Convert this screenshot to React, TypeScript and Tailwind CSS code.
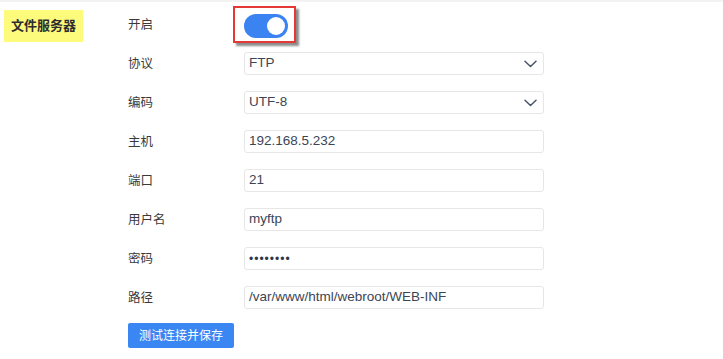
import React from "react";

const font = { fontFamily: '"Liberation Sans", "Noto Sans CJK SC", sans-serif' };

function Chevron() {
  return (
    <svg width="13" height="8" viewBox="0 0 13 8" fill="none" className="shrink-0">
      <path d="M1 1.2L6.5 6.5L12 1.2" stroke="#4a5568" strokeWidth="1.5" strokeLinecap="round" strokeLinejoin="round" />
    </svg>
  );
}

function Row({ label, children }: { label: string; children: React.ReactNode }) {
  return (
    <div className="flex h-[39px] items-center">
      <div className="w-[116px] pt-[2px] text-[12.5px] text-[#3a3a3a]">{label}</div>
      {children}
    </div>
  );
}

function Field({ value, select, dots }: { value: string; select?: boolean; dots?: boolean }) {
  return (
    <div className="flex h-[23px] w-[300px] items-center justify-between rounded-[3px] border border-[#e6e6e6] bg-white pl-[4px] pr-[6px]">
      <span className={dots ? "text-[12px] tracking-[1px] text-[#2d3748]" : "text-[13.5px] text-[#3c4554]"}>{value}</span>
      {select && <Chevron />}
    </div>
  );
}

export default function App() {
  return (
    <div className="h-[359px] w-[723px] overflow-hidden bg-white" style={font}>
      <div className="h-[2px] bg-[#f3f3f3]" />
      <div className="flex">
        <div className="w-[128px] pl-[4px] pt-[8px]">
          <div className="flex h-[32px] w-[79px] items-center justify-center bg-[#fdfb7c] text-[13px] font-bold text-[#2d2d2d]">
            文件服务器
          </div>
        </div>
        <div className="flex flex-col pt-[3px]">
          <Row label="开启">
            <div className="-ml-[11px] h-[37px] w-[63px] border-2 border-[#e53935] pl-[9px] pt-[6px] shadow-[3px_3px_2px_rgba(0,0,0,0.45)]">
              <div className="flex h-[24px] w-[44px] items-center justify-end rounded-full bg-[#3a83f1] pr-[3px]">
                <div className="h-[18px] w-[18px] rounded-full bg-white" />
              </div>
            </div>
          </Row>
          <Row label="协议">
            <Field value="FTP" select />
          </Row>
          <Row label="编码">
            <Field value="UTF-8" select />
          </Row>
          <Row label="主机">
            <Field value="192.168.5.232" />
          </Row>
          <Row label="端口">
            <Field value="21" />
          </Row>
          <Row label="用户名">
            <Field value="myftp" />
          </Row>
          <Row label="密码">
            <Field value="••••••••" dots />
          </Row>
          <Row label="路径">
            <Field value="/var/www/html/webroot/WEB-INF" />
          </Row>
          <div className="mt-[6px] flex h-[25px] w-[106px] items-center justify-center rounded-[2px] bg-[#3a86f2] text-[12px] text-white">
            测试连接并保存
          </div>
        </div>
      </div>
    </div>
  );
}
